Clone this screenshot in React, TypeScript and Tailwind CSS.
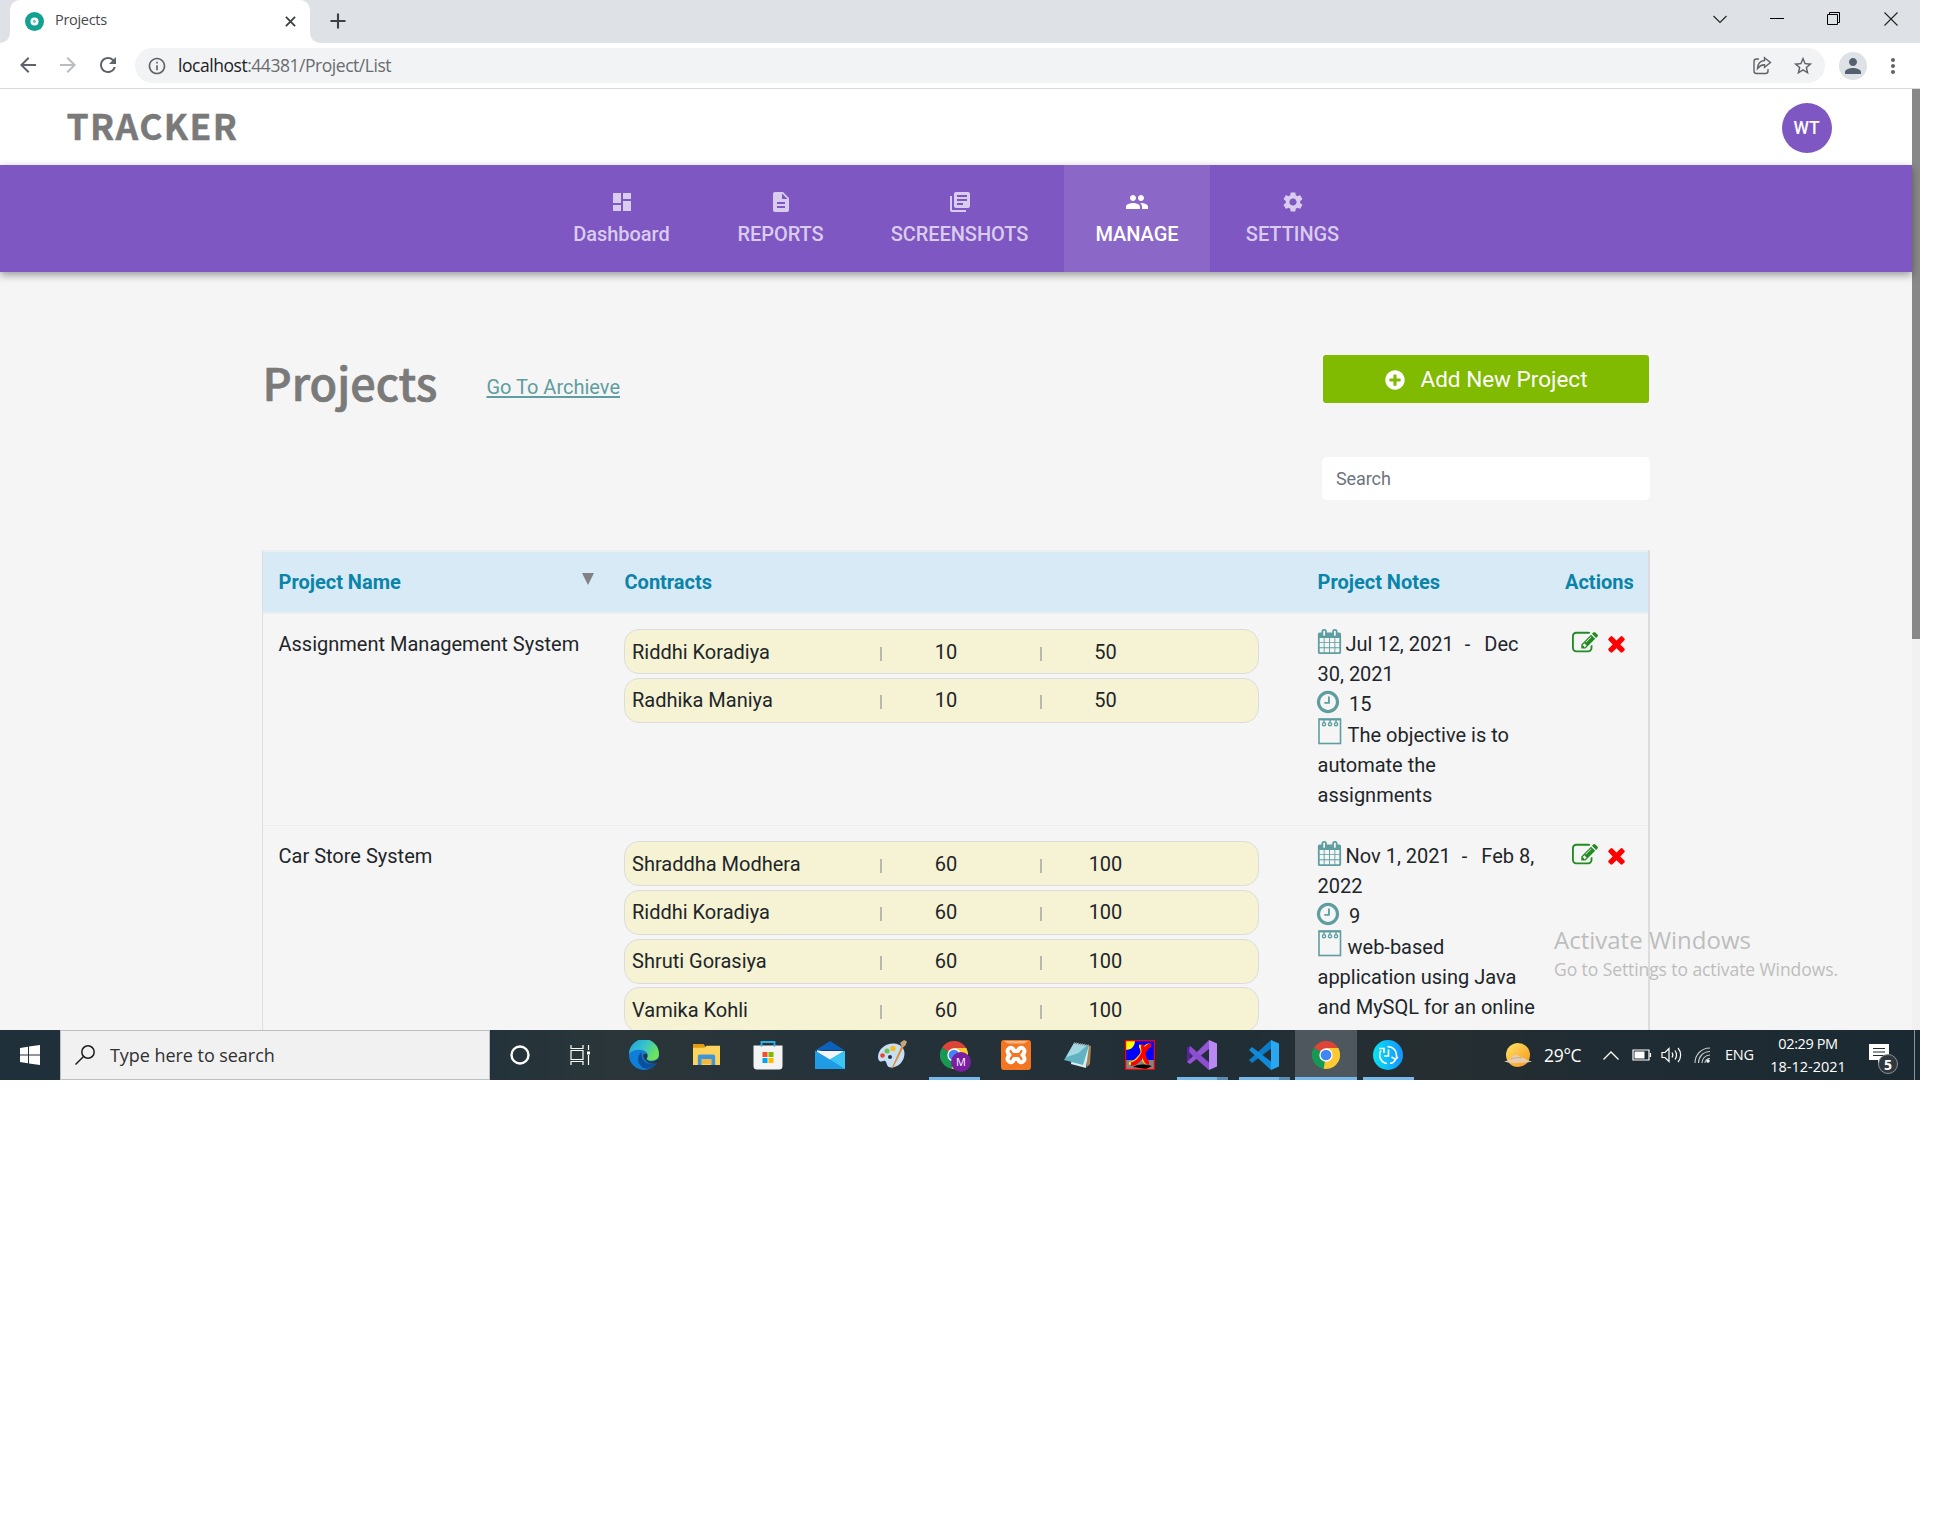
import type { ReactNode } from "react";
import {
  MdArrowBack,
  MdArrowForward,
  MdDashboard,
  MdDescription,
  MdInfoOutline,
  MdLibraryBooks,
  MdMoreVert,
  MdPeople,
  MdPerson,
  MdRefresh,
  MdSettings,
  MdStarBorder,
} from "react-icons/md";
import { FaPlusCircle } from "react-icons/fa";

const PENCIL =
  "M888 1184l116-116-152-152-116 116v56h96v96h56zm440-720q-16-16-33 1l-350 350q-17 17-1 33t33-1l350-350q17-17 1-33zm80 594v190q0 119-84.5 203.5t-203.5 84.5h-832q-119 0-203.5-84.5t-84.5-203.5v-832q0-119 84.5-203.5t203.5-84.5h832q63 0 117 25 15 7 18 23 3 17-9 29l-49 49q-14 14-32 8-23-6-45-6h-832q-66 0-113 47t-47 113v832q0 66 47 113t113 47h832q66 0 113-47t47-113v-126q0-13 9-22l64-64q15-15 35-7t20 29zm-96-738l288 288-672 672h-288v-288zm444 132l-92 92-288-288 92-92q28-28 68-28t68 28l152 152q28 28 28 68t-28 68z";
const TIMES =
  "M1490 1322q0 40-28 68l-136 136q-28 28-68 28t-68-28l-294-294-294 294q-28 28-68 28t-68-28l-136-136q-28-28-28-68t28-68l294-294-294-294q-28-28-28-68t28-68l136-136q28-28 68-28t68 28l294 294 294-294q28-28 68-28t68 28l136 136q28 28 28 68t-28 68l-294 294 294 294q28 28 28 68z";
const CALENDAR =
  "M192 1664h288v-288h-288v288zm352 0h320v-288h-320v288zm-352-352h288v-320h-288v320zm352 0h320v-320h-320v320zm-352-384h288v-288h-288v288zm736 736h320v-288h-320v288zm-384-736h320v-288h-320v288zm768 736h288v-288h-288v288zm-384-352h320v-320h-320v320zm-352-864v-288q0-13-9.5-22.5t-22.5-9.5h-64q-13 0-22.5 9.5t-9.5 22.5v288q0 13 9.5 22.5t22.5 9.5h64q13 0 22.5-9.5t9.5-22.5zm736 864h288v-320h-288v320zm-384-384h320v-288h-320v288zm384 0h288v-288h-288v288zm32-480v-288q0-13-9.5-22.5t-22.5-9.5h-64q-13 0-22.5 9.5t-9.5 22.5v288q0 13 9.5 22.5t22.5 9.5h64q13 0 22.5-9.5t9.5-22.5zm384-64v1280q0 52-38 90t-90 38h-1408q-52 0-90-38t-38-90v-1280q0-52 38-90t90-38h128v-96q0-66 47-113t113-47h64q66 0 113 47t47 113v96h384v-96q0-66 47-113t113-47h64q66 0 113 47t47 113v96h128q52 0 90 38t38 90z";
const CLOCK =
  "M1024 544v448q0 14-9 23t-23 9h-320q-14 0-23-9t-9-23v-64q0-14 9-23t23-9h224v-352q0-14 9-23t23-9h64q14 0 23 9t9 23zm416 352q0-148-73-273t-198-198-273-73-273 73-198 198-73 273 73 273 198 198 273 73 273-73 198-198 73-273zm224 0q0 209-103 385.5t-279.5 279.5-385.5 103-385.5-103-279.5-279.5-103-385.5 103-385.5 279.5-279.5 385.5-103 385.5 103 279.5 279.5 103 385.5z";

function Glyph({ d, className }: { d: string; className: string }) {
  return (
    <svg viewBox="0 0 1792 1792" className={`shrink-0 ${className}`} fill="currentColor">
      <path d={d} />
    </svg>
  );
}

function NotepadIcon() {
  return (
    <svg viewBox="0 0 24 27" className="-mt-[7px] h-[27px] w-6 shrink-0" fill="none" stroke="#5f9ea0">
      <rect x="1" y="1.5" width="21.5" height="24" strokeWidth="1.6" />
      <path d="M0.5 1.2h22.5" strokeWidth="2" />
      <g strokeWidth="1.4">
        <circle cx="6" cy="6.2" r="1.6" />
        <circle cx="12" cy="6.2" r="1.6" />
        <circle cx="18" cy="6.2" r="1.6" />
        <path d="M6 2v3M12 2v3M18 2v3" />
      </g>
    </svg>
  );
}

/* ---------- Browser chrome ---------- */

function TabStrip() {
  return (
    <div className="flex h-[43px] shrink-0 items-end bg-[#dee1e6]">
      <svg viewBox="0 0 10 10" className="h-[10px] w-[10px]">
        <path d="M10 0v10H0A10 10 0 0 0 10 0z" fill="#fff" />
      </svg>
      <div className="flex h-[43px] w-[300px] items-center rounded-t-[10px] bg-white pl-[15px] pr-[14px]">
        <svg viewBox="0 0 20 20" className="-mt-px h-[19px] w-[19px]">
          <circle cx="10" cy="10" r="10" fill="#12a192" />
          <circle cx="10" cy="10" r="4.2" fill="#fff" />
          <circle cx="10" cy="10" r="1.5" fill="#5cc4ba" />
        </svg>
        <span className="-mt-[3px] ml-[11px] text-[14.5px] tracking-[-0.3px] text-[#45494d]">Projects</span>
        <svg viewBox="0 0 12 12" className="-mt-px ml-auto h-[11px] w-[11px]" stroke="#3c4043" strokeWidth="2">
          <path d="M1 1l10 10M11 1L1 11" />
        </svg>
      </div>
      <svg viewBox="0 0 10 10" className="h-[10px] w-[10px]">
        <path d="M0 0v10h10A10 10 0 0 1 0 0z" fill="#fff" />
      </svg>
      <svg viewBox="0 0 16 16" className="mb-[14px] ml-[9.500px] h-4 w-4" stroke="#3c4043" strokeWidth="2.1">
        <path d="M8 0.5v15M0.5 8h15" />
      </svg>
      <div className="mb-[17px] ml-auto mr-[22px] flex items-center gap-[43px]">
        <svg viewBox="0 0 14 14" className="h-[14px] w-[14px]" fill="none" stroke="#222" strokeWidth="1.1">
          <path d="M0.5 4l6.5 6.5L13.500 4" />
        </svg>
        <svg viewBox="0 0 14 14" className="h-[14px] w-[14px]" stroke="#000" strokeWidth="1">
          <path d="M0 6.500h14" />
        </svg>
        <svg viewBox="0 0 14 14" className="h-[14px] w-[14px]" fill="none" stroke="#000" strokeWidth="1">
          <path d="M0.500 2.500h10v10h-10zM2.500 2V0.500h10v10H11" />
        </svg>
        <svg viewBox="0 0 14 14" className="h-[14px] w-[14px]" stroke="#222" strokeWidth="1.1">
          <path d="M0.500 0.500l13 13M13.500 0.500l-13 13" />
        </svg>
      </div>
    </div>
  );
}

function AddressBar() {
  return (
    <div className="flex h-[46px] shrink-0 items-center border-b border-[#d9dadc] bg-white pl-[15.500px]">
      <MdArrowBack className="-mt-px h-6 w-6 text-[#5f6368]" />
      <MdArrowForward className="-mt-px ml-4 h-6 w-6 text-[#babcbe]" />
      <MdRefresh className="-mt-px ml-4 h-6 w-6 text-[#5f6368]" />
      <div className="ml-[15.500px] flex h-[35px] w-[1690px] items-center rounded-full bg-[#f1f3f4] pl-[12px] pr-[11px]">
        <MdInfoOutline className="h-5 w-5 text-[#5f6368]" />
        <span className="ml-[11px] text-[17.5px] tracking-[-0.46px] text-[#686c70]">
          <span className="text-[#202124]">localhost</span>:44381/Project/List
        </span>
        <svg viewBox="0 0 20 20" className="ml-auto h-5 w-5" fill="none" stroke="#5f6368" strokeWidth="1.4">
          <path d="M7 3H4.500A2.500 2.500 0 0 0 2 5.500v9.500A2.500 2.500 0 0 0 4.500 17.500h9a2.500 2.500 0 0 0 2.500-2.500V13" />
          <path d="M12.500 1.800L18.500 6.500l-6 4.800V8.700C9.500 8.500 7.500 10 5.500 12.500c.3-4.500 3-7.700 7-8z" />
        </svg>
        <MdStarBorder className="ml-[20px] h-[22px] w-[22px] text-[#5f6368]" />
      </div>
      <div className="ml-[14px] flex h-7 w-7 items-center justify-center rounded-full bg-[#dee1e6]">
        <MdPerson className="h-6 w-6 text-[#54606f]" />
      </div>
      <MdMoreVert className="ml-[13.500px] h-6 w-6 text-[#5f6368]" />
    </div>
  );
}

/* ---------- Page ---------- */

const NAV = [
  { label: "Dashboard", icon: MdDashboard, width: "w-[161px]", active: false },
  { label: "REPORTS", icon: MdDescription, width: "w-[149px]", active: false },
  { label: "SCREENSHOTS", icon: MdLibraryBooks, width: "w-[201px]", active: false },
  { label: "MANAGE", icon: MdPeople, width: "w-[146px]", active: true },
  { label: "SETTINGS", icon: MdSettings, width: "w-[157px]", active: false },
];

function Navigation() {
  return (
    <nav className="relative flex h-[107px] shrink-0 justify-center gap-1 bg-[#7e57c2] shadow-[0_3px_8px_rgba(0,0,0,0.38)]">
      {NAV.map(({ label, icon: Icon, width, active }) => (
        <div
          key={label}
          className={`flex flex-col items-center pt-[25px] text-[20px] font-medium leading-[30px] tracking-[-0.05px] ${width} ${
            active ? "bg-white/10 text-white" : "text-[#d9ccee]"
          }`}
        >
          <Icon className="h-6 w-6" />
          <span className="mt-[5px]">{label}</span>
        </div>
      ))}
    </nav>
  );
}

type Contract = { name: string; rate: string; limit: string };
type Project = {
  name: string;
  contracts: Contract[];
  from: string;
  to: string;
  wrap: string;
  hours: string;
  notes: string[];
};

const PROJECTS: Project[] = [
  {
    name: "Assignment Management System",
    contracts: [
      { name: "Riddhi Koradiya", rate: "10", limit: "50" },
      { name: "Radhika Maniya", rate: "10", limit: "50" },
    ],
    from: "Jul 12, 2021",
    to: "Dec",
    wrap: "30, 2021",
    hours: "15",
    notes: ["The objective is to", "automate the", "assignments"],
  },
  {
    name: "Car Store System",
    contracts: [
      { name: "Shraddha Modhera", rate: "60", limit: "100" },
      { name: "Riddhi Koradiya", rate: "60", limit: "100" },
      { name: "Shruti Gorasiya", rate: "60", limit: "100" },
      { name: "Vamika Kohli", rate: "60", limit: "100" },
    ],
    from: "Nov 1, 2021",
    to: "Feb 8,",
    wrap: "2022",
    hours: "9",
    notes: ["web-based", "application using Java", "and MySQL for an online"],
  },
];

function ContractPill({ name, rate, limit }: Contract) {
  return (
    <div className="flex h-[45px] w-[635px] items-center rounded-[15px] border border-[#dcdcdc] bg-[#f5f3d4] pl-[7px]">
      <span className="w-[248px]">{name}</span>
      <span className="mt-[4px] h-[14px] w-[2px] bg-[#b9b8ad]" />
      <span className="w-[128px] text-center">{rate}</span>
      <span className="ml-[30px] mt-[4px] h-[14px] w-[2px] bg-[#b9b8ad]" />
      <span className="w-[127px] text-center">{limit}</span>
    </div>
  );
}

function ProjectRow({ project }: { project: Project }) {
  return (
    <div className="grid h-[212px] grid-cols-[346px_693px_248px_98px] border-b border-[#ebecee] text-[20px] leading-[30px] text-[#212529]">
      <div className="pl-[15.500px] pt-[15px]">{project.name}</div>
      <div className="flex flex-col gap-[3.750px] pl-[15px] pt-[15px]">
        {project.contracts.map((c) => (
          <ContractPill key={c.name} {...c} />
        ))}
      </div>
      <div className="whitespace-nowrap pl-[15.500px] pt-[15px]">
        <div className="flex h-[30px] items-center">
          <Glyph d={CALENDAR} className="-ml-px -mt-[5px] h-[25px] w-[25px] text-[#5f9ea0]" />
          <span className="ml-[4px]">{project.from}</span>
          <span className="ml-[11px] mr-[14px]">-</span>
          <span>{project.to}</span>
        </div>
        <div>{project.wrap}</div>
        <div className="flex h-[30px] items-center">
          <Glyph d={CLOCK} className="-ml-[2.500px] -mt-[5px] h-[26px] w-[26px] text-[#5f9ea0]" />
          <span className="ml-[8px]">{project.hours}</span>
        </div>
        <div className="flex h-[31px] items-center">
          <NotepadIcon />
          <span className="ml-[6px]">{project.notes[0]}</span>
        </div>
        {project.notes.slice(1).map((line) => (
          <div key={line}>{line}</div>
        ))}
      </div>
      <div className="flex h-[30px] items-center pl-[21.500px] pt-[15px]">
        <Glyph d={PENCIL} className="mt-[12px] h-[26px] w-[26px] text-[#228b22]" />
        <Glyph d={TIMES} className="ml-[6px] mt-[14px] h-[25px] w-[25px] text-[#ff0000]" />
      </div>
    </div>
  );
}

function ProjectTable() {
  return (
    <div className="ml-[262px] mt-[50px] w-[1388px] border-l border-r-2 border-l-[#dcdee0] border-r-[#dcdcde]">
      <div className="grid h-[64px] grid-cols-[346px_693px_248px_98px] items-center border-y-2 border-[#ebeef1] bg-[#d8eaf6] text-[20px] font-bold text-[#0a84a8]">
        <div className="flex items-center pl-[15.500px]">
          Project Name
          <span className="mb-[7px] ml-auto mr-[15px] h-0 w-0 border-x-[6px] border-t-[12px] border-x-transparent border-t-[#808284]" />
        </div>
        <div className="pl-[15.500px]">Contracts</div>
        <div className="pl-[15.500px]">Project Notes</div>
        <div className="pl-[15px]">Actions</div>
      </div>
      {PROJECTS.map((p) => (
        <ProjectRow key={p.name} project={p} />
      ))}
    </div>
  );
}

function Page() {
  return (
    <div className="relative flex min-h-0 flex-1 overflow-hidden bg-[#f5f5f5] font-[Roboto,sans-serif]">
      <div className="flex w-[1912px] flex-col">
        <header className="flex h-[76px] shrink-0 items-center justify-between bg-white pl-[66.500px] pr-[80.500px]">
          <span className="-mt-[5px] font-['Noto_Sans_CJK_SC',sans-serif] text-[35.500px] font-bold leading-none tracking-[1.400px] text-[#7a7a7a] [-webkit-text-stroke:0.4px_#7a7a7a]">
            TRACKER
          </span>
          <span className="mt-[2px] flex h-[50px] w-[50px] items-center justify-center rounded-full bg-[#7e57c2] text-[17.500px] font-medium text-white">
            WT
          </span>
        </header>
        <Navigation />
        <div className="flex h-[131px] shrink-0 items-end pl-[262.500px] pr-[263px]">
          <h1 className="-mb-[9px] font-['Noto_Sans_CJK_SC',sans-serif] text-[45px] font-medium leading-[60px] text-[#7a7a7a] [-webkit-text-stroke:0.7px_#7a7a7a]">
            Projects
          </h1>
          <a className="-mb-px ml-[49px] pb-[2px] text-[20px] leading-[30px] text-[#5f9ea0] underline decoration-2 underline-offset-2">
            Go To Archieve
          </a>
          <button className="ml-auto flex h-[48px] w-[326px] items-center justify-center rounded-[3px] bg-[#80ba01] pt-px text-[22.500px] text-white">
            <FaPlusCircle className="mr-[16px] h-5 w-5" />
            Add New Project
          </button>
        </div>
        <div className="mt-[54px] flex justify-end pr-[262px]">
          <div className="flex h-[43px] w-[328px] items-center rounded-[5px] bg-white pl-[14px] text-[18px] tracking-[-0.1px] text-[#6c757d]">
            Search
          </div>
        </div>
        <ProjectTable />
      </div>
      <div className="w-2 bg-[#f1f1f1]">
        <div className="h-[550px] bg-[#888888]" />
      </div>
      <div className="absolute left-[1554px] top-[834px] font-['Open_Sans',sans-serif] text-[#bdbdbd]">
        <div className="text-[24px] leading-[34px]">Activate Windows</div>
        <div className="text-[17.500px] leading-[25px] tracking-[-0.08px]">Go to Settings to activate Windows.</div>
      </div>
    </div>
  );
}

/* ---------- Taskbar ---------- */

function ChromeLogo({ className }: { className: string }) {
  return (
    <svg viewBox="0 0 48 48" className={className}>
      <path d="M24 24L3.200 12A24 24 0 0 1 44.800 12z" fill="#db4437" />
      <path d="M24 24l20.800-12A24 24 0 0 1 24 48z" fill="#fcc934" />
      <path d="M24 24v24A24 24 0 0 1 3.200 12z" fill="#169a53" />
      <path d="M24 12h20.800a24 24 0 0 1 .8 1.500L34 24z" fill="#fcc934" />
      <path d="M34.400 30L24 48l-4-.3L24 24z" fill="#fcc934" />
      <path d="M13.600 30L3.200 12 24 24z" fill="#169a53" />
      <circle cx="24" cy="24" r="11.500" fill="#fff" />
      <circle cx="24" cy="24" r="9.200" fill="#4285f4" />
    </svg>
  );
}

function EdgeLogo() {
  return (
    <svg viewBox="0 0 30 30" className="h-[30px] w-[30px]">
      <defs>
        <linearGradient id="edgeTop" x1="0" x2="1" y1="0" y2="0.500">
          <stop offset="0" stopColor="#1e9de0" />
          <stop offset="0.500" stopColor="#35c1d0" />
          <stop offset="1" stopColor="#6ce55a" />
        </linearGradient>
      </defs>
      <circle cx="15" cy="15" r="15" fill="#0f7fd6" />
      <path d="M0 14A15 15 0 0 1 30 14c0 5-4 6.500-7.500 6.500-3.500 0-5-1.500-4.500-2.500 2-2.500.5-7-5.500-8C7 9.300 2 11 0 14z" fill="url(#edgeTop)" />
      <path d="M12.500 12C8.500 15 8 21 11 25c3 4 8 5 12 2.500 2.500-1.500 4-3.500 5-5.500-3 2-9 2.500-12.500-.5-2.500-2.500-3-6-3-9.500z" fill="#0c4f9e" />
      <path d="M17.500 13.500c1.500 2 1 4-.2 5 .2 2 3 3.500 7 2.700 2-.4 4.500-2 6-3.500v4.300l-2 .8c-1 .5-2 .7-3.500.7-6 0-11-4-10.500-9z" fill="#283539" />
    </svg>
  );
}

function ExplorerLogo() {
  return (
    <svg viewBox="0 0 30 28" className="-mt-[2px] h-[27px] w-[29px]">
      <path d="M1 3h11l2 3v4H1z" fill="#e09c10" />
      <path d="M1 7h12l2-2h14v20H1z" fill="#ffd45e" />
      <path d="M6 25V16a2 2 0 0 1 2-2h14a2 2 0 0 1 2 2v9h-4v-6H10v6z" fill="#3f95d8" />
      <path d="M10 19h10v5H10z" fill="#f6b93c" />
    </svg>
  );
}

function StoreLogo() {
  return (
    <svg viewBox="0 0 30 30" className="-ml-px h-[30px] w-[30px]">
      <path d="M8.500 8V2h13v6" fill="none" stroke="#29b0ee" strokeWidth="1.800" />
      <path d="M0.500 5.500h29v20.500a3.500 3.500 0 0 1-3.500 3.500H4A3.500 3.500 0 0 1 .5 26z" fill="#f3f3f3" />
      <path d="M8.500 5v1.500M21.500 5v1.500" stroke="#29b0ee" strokeWidth="1.800" />
      <path d="M9.500 12h5v5h-5z" fill="#f25022" />
      <path d="M15.500 12h5v5h-5z" fill="#7fba00" />
      <path d="M9.500 18h5v5h-5z" fill="#00a4ef" />
      <path d="M15.500 18h5v5h-5z" fill="#ffb900" />
    </svg>
  );
}

function MailLogo() {
  return (
    <svg viewBox="0 0 30 28" className="h-[28px] w-[30px]">
      <path d="M0 9.500L15 0l15 9.500z" fill="#0c62b8" />
      <path d="M2 9h26v10H2z" fill="#f4f4f4" />
      <path d="M0 9.500l15 9 15-9V28H0z" fill="#1f9ce4" />
      <path d="M15 18.500l15-9V28z" fill="#3cc4f4" />
      <path d="M0 9h30v1l-7 0H7z" fill="#0a3f80" />
    </svg>
  );
}

function PaintLogo() {
  return (
    <svg viewBox="0 0 30 30" className="h-[30px] w-[30px]">
      <path d="M17 3.500C9 3 1 9 1 17c0 3 1.500 5 3.500 4.500S8 20 9 22s1 5.500 5 5.500c8 0 13.500-7 13.500-14C27.500 7.500 23 4 17 3.500z" fill="#c6dff2" />
      <circle cx="5.500" cy="15.500" r="2.300" fill="#e3463c" />
      <circle cx="10" cy="11" r="2.500" fill="#6cbf4c" />
      <circle cx="16" cy="8.500" r="2.700" fill="#f8bb22" />
      <circle cx="13" cy="17" r="2" fill="#24323a" />
      <path d="M25 5l2 1-11 22-1.500.5z" fill="#e08a2e" />
      <path d="M23 3l4-3 3 1.500-1.500 4-3 2z" fill="#c7a57c" />
    </svg>
  );
}

function XamppLogo() {
  return (
    <svg viewBox="0 0 30 30" className="h-[30px] w-[30px]">
      <rect width="30" height="30" rx="3" fill="#f37623" />
      <path d="M3 1h24l-4 2.500H7z" fill="#f9b68a" />
      <g fill="none" stroke="#fff" strokeWidth="4" strokeLinecap="round" strokeLinejoin="round">
        <path d="M7 9.500c2-3 5.500-1.500 6 1.500h4c.5-3 4-4.500 6-1.500 1.500 2.500 0 4-1.500 5.500 1.500 1.500 3 3 1.500 5.500-2 3-5.500 1.500-6-1.500h-4c-.5 3-4 4.500-6 1.500-1.500-2.500 0-4 1.500-5.500C7 13.500 5.500 12 7 9.500z" />
      </g>
    </svg>
  );
}

function NotepadLogo() {
  return (
    <svg viewBox="0 0 30 30" className="h-[30px] w-[30px]">
      <path d="M24 5l4 1-1 18-3 3z" fill="#a98352" />
      <path d="M11 3l15 2.500L23 28 8 24z" fill="#d9eef2" />
      <path d="M11 3l15 2.500L20 25 1 20z" fill="#62b2c2" />
      <path d="M11 3l13 2.200-9 8-12 4z" fill="#a5d8e0" />
      <path d="M11 3l15 2.500" stroke="#8c8c8c" strokeWidth="2" strokeDasharray="1 1" />
    </svg>
  );
}

function XmingLogo() {
  return (
    <svg viewBox="0 0 30 30" className="h-[30px] w-[30px]">
      <path d="M0 0h30v30H0z" fill="#0000ff" />
      <path d="M0 20h30v10H0z" fill="#848484" />
      <path d="M0 0h10c0 6-3 10-10 10z" fill="#ffff00" />
      <path d="M8 27c6-3 9-3 19-1l-6 3z" fill="#000" />
      <path d="M14 6c3 0 3 6 3.500 10s2 7 5 7M24 5c-4-1-5 6-9 11S8 24 4 23" fill="none" stroke="#f8e800" strokeWidth="3" />
      <path d="M16 6c3 0 2 6 3 10s2 7 5 7M26 5c-4 0-6 6-10 12S9 24 6 24" fill="none" stroke="#ff0000" strokeWidth="4" />
      <path d="M0.500 0.500h29v29h-29z" fill="none" stroke="#ff0000" strokeWidth="1.500" />
    </svg>
  );
}

function VisualStudioLogo() {
  return (
    <svg viewBox="0 0 30 30" className="h-[30px] w-[30px]">
      <path d="M0 8l3-2L22 22v8L3 14z" fill="#6b2fa8" />
      <path d="M0 8l3.500-2v18L0 22z" fill="#59249a" />
      <path d="M3 24L0 22 22 0v9z" fill="#9455d6" />
      <path d="M3 6l19 17v7L2 12z" fill="#8a4fcf" />
      <path d="M22 0l8 3.500v23L22 30z" fill="#b988f2" />
    </svg>
  );
}

function VsCodeLogo() {
  return (
    <svg viewBox="0 0 30 30" className="h-[30px] w-[30px]">
      <path d="M0 20L22 0v8.500L3 23z" fill="#0b7cc9" />
      <path d="M0 10l3-3 19 14.500V30z" fill="#0f8bd8" />
      <path d="M22 0l8 3.500v23L22 30z" fill="#28a8f0" />
    </svg>
  );
}

function TimerLogo() {
  return (
    <svg viewBox="0 0 30 30" className="h-[30px] w-[30px]">
      <defs>
        <linearGradient id="timerFill" x1="0" x2="1" y1="0" y2="0">
          <stop offset="0" stopColor="#06e3f2" />
          <stop offset="1" stopColor="#1593ff" />
        </linearGradient>
      </defs>
      <circle cx="15" cy="15" r="15" fill="url(#timerFill)" />
      <g fill="none" stroke="#fff" strokeWidth="1.600">
        <path d="M6 8.500h5V13M8 10.500a8.500 8.500 0 0 0 6 13M14.500 6.600A8.500 8.500 0 0 1 23.500 15v3.500M17 23.300c2 0 4.500-2 5.500-4l-4-2.300M22.500 19.500l2.500-2.500" />
        <path d="M15.500 9.500V16H11" />
      </g>
    </svg>
  );
}

function TaskItem({ children, bar, active }: { children: ReactNode; bar?: "full" | "split" | "wide"; active?: boolean }) {
  return (
    <div className={`relative flex h-[50px] w-[62px] items-center justify-center ${active ? "bg-[#4d575d]" : ""}`}>
      {children}
      {bar === "full" && <span className="absolute bottom-0 left-[6px] h-[3px] w-[51px] bg-[#76b9ed]" />}
      {bar === "wide" && <span className="absolute bottom-0 left-0 h-[3px] w-full bg-[#76b9ed]" />}
      {bar === "split" && (
        <span className="absolute bottom-0 left-[6px] flex h-[3px] w-[51px]">
          <span className="w-[40px] bg-[#76b9ed]" />
          <span className="flex-1 bg-[#5a8db5]" />
        </span>
      )}
    </div>
  );
}

function Taskbar() {
  return (
    <div className="flex h-[50px] shrink-0 items-center bg-[linear-gradient(90deg,#20303a_0%,#22323b_24%,#2a3639_32%,#25323a_45%,#222e36_65%,#262e31_75%,#1f2c33_83%,#1b2932_100%)]">
      <div className="flex w-[60px] justify-center">
        <svg viewBox="0 0 20 20" className="h-5 w-5" fill="#fff">
          <path d="M0 3l8-1.200v7.700H0zM9 1.600L20 0v9.500H9zM0 10.500h8v7.700L0 17zM9 10.500h11V20L9 18.400z" />
        </svg>
      </div>
      <div className="flex h-[50px] w-[430px] items-center border border-[#bdbfc0] bg-[#f1f1f1] pl-[14px]">
        <svg viewBox="0 0 20 20" className="h-5 w-5" fill="none" stroke="#1d1d1d" strokeWidth="1.500">
          <circle cx="13" cy="7" r="6.200" />
          <path d="M8.500 11.500L0.500 19.500" />
        </svg>
        <span className="ml-[15px] text-[18px] tracking-[-0.05px] text-[#303030]">Type here to search</span>
      </div>
      <div className="flex w-[60px] justify-center">
        <svg viewBox="0 0 20 20" className="h-5 w-5" fill="none" stroke="#fff" strokeWidth="2.400">
          <circle cx="10" cy="10" r="8.500" />
        </svg>
      </div>
      <div className="flex w-[60px] justify-center">
        <svg viewBox="0 0 21 20" className="h-5 w-[21px]" fill="none" stroke="#fff" strokeWidth="1.200">
          <path d="M1 0v3.500h12V0M1 20v-3.500h12V20M1 5.500h12v9H1zM18.500 0v5M18.500 10v10" />
          <path d="M17 6.500h3v3h-3z" fill="#fff" stroke="none" />
        </svg>
      </div>
      <div className="ml-[3px] flex">
        <TaskItem><EdgeLogo /></TaskItem>
        <TaskItem><ExplorerLogo /></TaskItem>
        <TaskItem><StoreLogo /></TaskItem>
        <TaskItem><MailLogo /></TaskItem>
        <TaskItem><PaintLogo /></TaskItem>
        <TaskItem bar="full">
          <ChromeLogo className="h-[28px] w-[28px]" />
          <span className="absolute left-[28px] top-[22px] flex h-5 w-5 items-center justify-center rounded-full bg-[#7b1fa2] text-[11px] text-white">
            M
          </span>
        </TaskItem>
        <TaskItem><XamppLogo /></TaskItem>
        <TaskItem><NotepadLogo /></TaskItem>
        <TaskItem><XmingLogo /></TaskItem>
        <TaskItem bar="split"><VisualStudioLogo /></TaskItem>
        <TaskItem bar="split"><VsCodeLogo /></TaskItem>
        <TaskItem bar="wide" active><ChromeLogo className="h-[28px] w-[28px]" /></TaskItem>
        <TaskItem bar="full"><TimerLogo /></TaskItem>
      </div>
      <div className="ml-auto flex h-[50px] items-center text-white">
        <svg viewBox="0 0 28 26" className="h-[26px] w-[28px]">
          <defs>
            <linearGradient id="sun" x1="0" x2="1" y1="0" y2="1">
              <stop offset="0" stopColor="#ffe566" />
              <stop offset="1" stopColor="#f7941d" />
            </linearGradient>
          </defs>
          <circle cx="14" cy="13" r="12" fill="url(#sun)" />
          <path d="M0 19.500c3-.5 5-1.500 7-2.500 1-4.500 7-5.500 10-1 3-1 5 2.500 11 3.500-8 2-20 2-28 0z" fill="#e6cdb0" />
          <path d="M7 17c3-1 6-2 10-1" fill="none" stroke="#c9a988" />
        </svg>
        <span className="ml-[12px] w-[59px] text-[17.500px] tracking-[-0.3px]">29°C</span>
        <svg viewBox="0 0 16 9" className="h-[9px] w-4" fill="none" stroke="#fff" strokeWidth="1.300">
          <path d="M0.500 8.500L8 1l7.500 7.500" />
        </svg>
        <svg viewBox="0 0 20 12" className="ml-[13px] h-3 w-5" fill="none" stroke="#fff" strokeWidth="1.200">
          <path d="M1 1h16v10H1zM18.500 4v4" />
          <path d="M2.500 2.500h10v7h-10z" fill="#fff" stroke="none" />
        </svg>
        <svg viewBox="0 0 22 16" className="ml-[9px] h-4 w-[22px]" fill="none" stroke="#fff" strokeWidth="1.200">
          <path d="M1 5.500h3L8 1.500v13L4 10.500H1zM11 5.500c1 1.500 1 3.500 0 5M14 3.500c2 3 2 6 0 9M17 1c3.500 4 3.500 10 0 14" />
        </svg>
        <svg viewBox="0 0 17 16" className="ml-[11px] h-4 w-[17px]" fill="none" stroke="#fff" strokeWidth="1.100">
          <path d="M1 16C1 8 7 1 16 1M4.500 16C4.500 10 9 4.500 16 4.500M8 16c0-4 3-8 8-8M11 16c0-2.500 2-4.500 5-4.500" stroke="#c5cacd" />
          <circle cx="14" cy="14" r="1.700" fill="#fff" stroke="none" />
        </svg>
        <span className="ml-[14px] w-[43px] text-[14.500px] tracking-[-0.2px]">ENG</span>
        <div className="w-[80px] whitespace-nowrap text-center text-[14.500px] leading-[23px]">
          <div className="tracking-[-0.4px]">02:29 PM</div>
          <div>18-12-2021</div>
        </div>
        <div className="relative ml-[21px] mr-[15px] h-[30px] w-[30px]">
          <svg viewBox="0 0 20 20" className="mt-[4px] h-5 w-5" fill="#fff">
            <path d="M0 0h20v16h-7l-4 4v-4H0z" />
            <path d="M4 4.500h12M4 8h12M4 11.500h12" stroke="#1f2c33" strokeWidth="1.200" />
          </svg>
          <span className="absolute left-[9px] top-[14px] flex h-5 w-5 items-center justify-center rounded-full border border-[#8d9396] bg-[#30383d] text-[14px] font-bold">
            5
          </span>
        </div>
        <span className="mr-[5px] h-[50px] w-px bg-[#8b9398]" />
      </div>
    </div>
  );
}

export default function App() {
  return (
    <div className="h-[1536px] w-[1936px] bg-white font-['Open_Sans','Noto_Sans',sans-serif]">
      <div className="flex h-[1080px] w-[1920px] flex-col overflow-hidden">
        <TabStrip />
        <AddressBar />
        <Page />
        <Taskbar />
      </div>
    </div>
  );
}
